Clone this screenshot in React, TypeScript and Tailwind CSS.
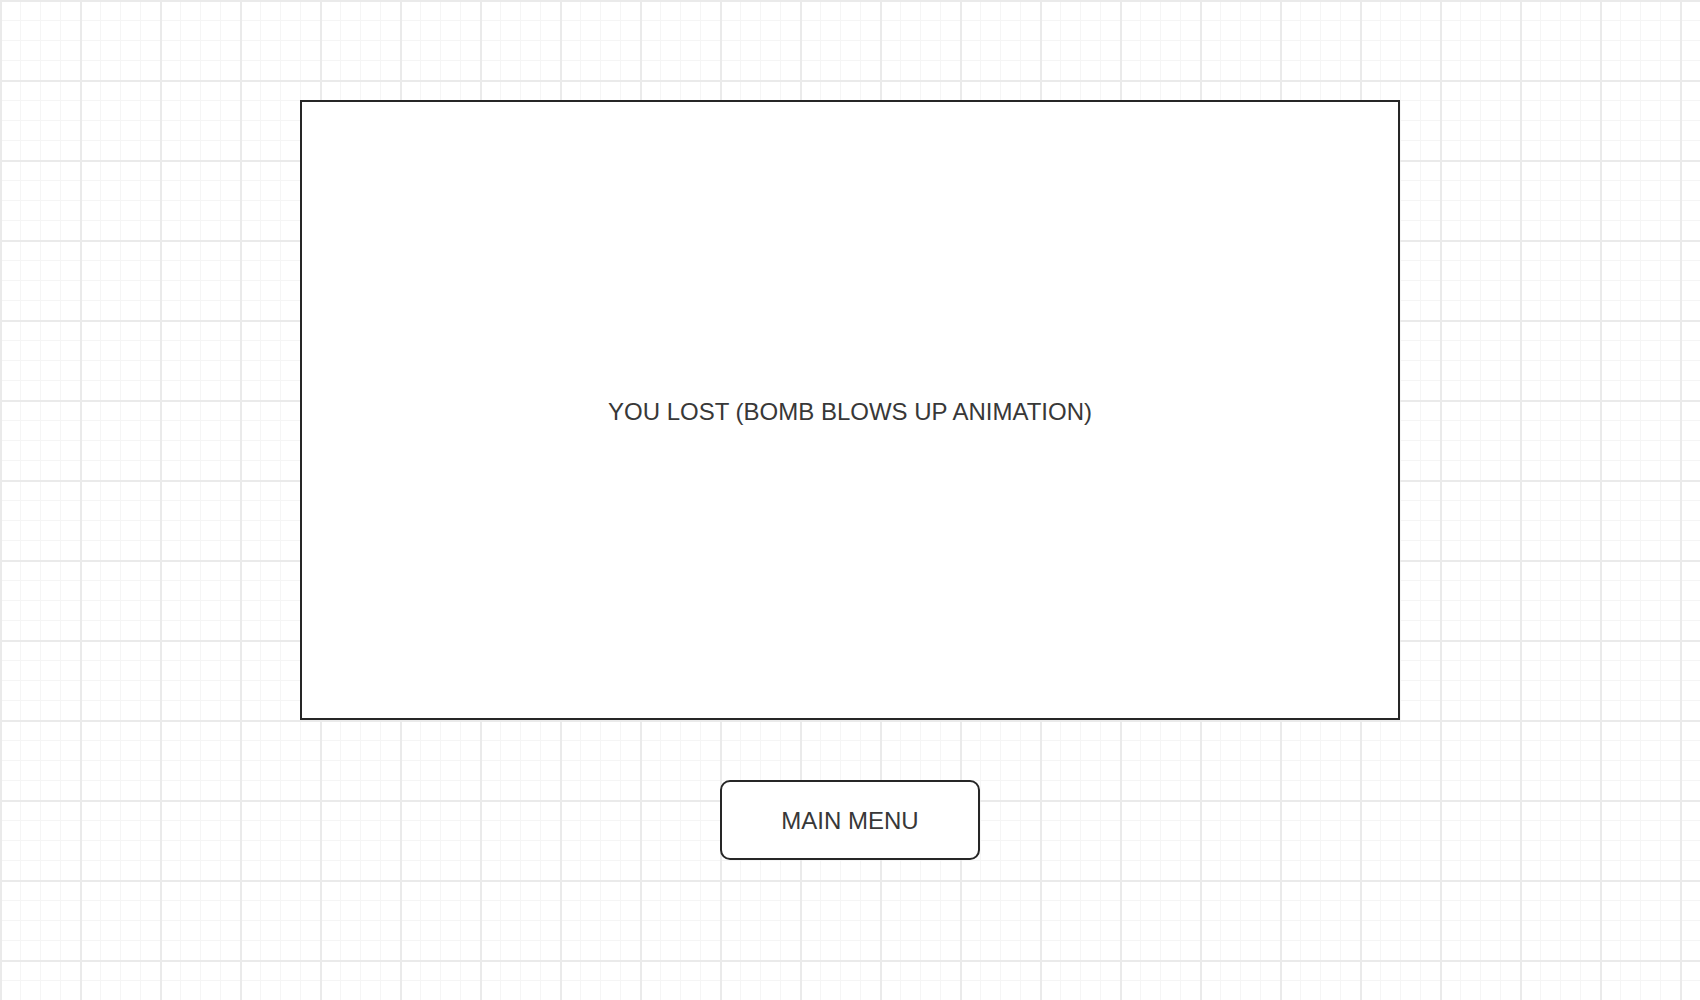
export default function App() {
  return (
    <div
      className="min-h-screen w-full flex flex-col items-center pt-[100px] bg-white [background-image:linear-gradient(to_right,#eaeaea_2px,transparent_2px),linear-gradient(to_bottom,#eaeaea_2px,transparent_2px),linear-gradient(to_right,#f5f5f5_1px,transparent_1px),linear-gradient(to_bottom,#f5f5f5_1px,transparent_1px)] [background-size:80px_80px,80px_80px,20px_20px,20px_20px]"
      style={{ fontFamily: '"Liberation Sans", Arial, Helvetica, sans-serif' }}
    >
      <div className="w-[1100px] h-[620px] border-2 border-[#262626] bg-white flex items-center justify-center">
        <span className="mt-[4px] text-[24px] text-[#383838] leading-none">YOU LOST (BOMB BLOWS UP ANIMATION)</span>
      </div>

      <button className="mt-[60px] w-[260px] h-[80px] border-2 border-[#262626] rounded-[10px] bg-white flex items-center justify-center">
        <span className="mt-[2px] text-[24px] text-[#383838] leading-none">MAIN MENU</span>
      </button>
    </div>
  );
}
